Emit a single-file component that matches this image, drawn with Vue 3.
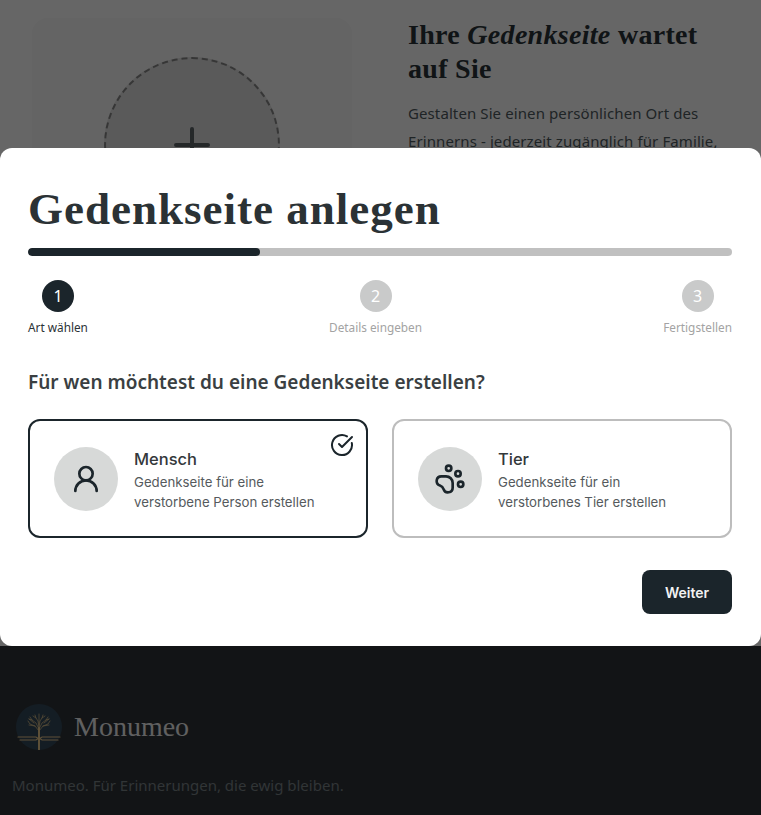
<template>
  <div class="page">
    <main class="hero">
      <div class="upload-card">
        <div class="upload-circle">
          <svg class="plus" viewBox="0 0 36 36" fill="none" stroke="#5c6468" stroke-width="4" stroke-linecap="round">
            <path d="M18 2v32M2 18h32" />
          </svg>
        </div>
      </div>
      <div class="intro">
        <h2>Ihre <em>Gedenkseite</em> wartet auf Sie</h2>
        <p>Gestalten Sie einen persönlichen Ort des Erinnerns - jederzeit zugänglich für Familie, Freunde und alle, die sich erinnern möchten.</p>
      </div>
    </main>
    <footer class="footer">
      <div class="brand">
        <svg class="logo" viewBox="0 0 46 46">
          <circle cx="23" cy="23" r="23" fill="#34495a" />
          <g stroke="#e8c88c" fill="none" stroke-width="0.7" stroke-linecap="round">
            <path d="M23 46V24" stroke-width="2" />
            <path d="M23 27l-4-5-5-2-2-3M23 27l4-5 5-2 2-3M23 25l-3-6-4-3-2-3M23 25l3-6 4-3 2-3M23 24l-1-7-2-3-1-3M23 24l1-7 2-3 1-3M23 20V10M19 22l-6-1M27 22l6-1M16 16l-3-1M30 16l3-1M20 14l-3-2M26 14l3-2M18 19l-5-4M28 19l5-4" />
            <path d="M2 33h18l3 2 3-2h18" stroke-width="1.2" />
            <path d="M4 36h16l3-2 3 2h16" stroke-width="1.2" />
          </g>
        </svg>
        <span class="brand-name">Monumeo</span>
      </div>
      <p class="tagline">Monumeo. Für Erinnerungen, die ewig bleiben.</p>
    </footer>

    <div class="overlay"></div>

    <section class="modal">
      <h1>Gedenkseite anlegen</h1>
      <div class="progress"><div class="progress-fill" :style="{ width: progress + '%' }"></div></div>

      <ol class="steps">
        <li v-for="(step, i) in steps" :key="step" class="step" :class="{ active: i === current }">
          <span class="step-num">{{ i + 1 }}</span>
          <span class="step-label">{{ step }}</span>
        </li>
      </ol>

      <h3 class="question">Für wen möchtest du eine Gedenkseite erstellen?</h3>

      <div class="options">
        <button class="option selected" type="button">
          <span class="option-icon">
            <svg viewBox="0 0 24 24" class="icon-svg">
              <circle cx="12" cy="8" r="5" />
              <path d="M20 21a8 8 0 0 0-16 0" />
            </svg>
          </span>
          <span class="option-text">
            <strong>Mensch</strong>
            <span>Gedenkseite für eine verstorbene Person erstellen</span>
          </span>
          <svg viewBox="0 0 24 24" class="icon-svg check">
            <path d="M21.801 10A10 10 0 1 1 17 3.335" />
            <path d="m9 11 3 3L22 4" />
          </svg>
        </button>
        <button class="option" type="button">
          <span class="option-icon">
            <svg viewBox="0 0 24 24" class="icon-svg">
              <circle cx="11" cy="4" r="2" />
              <circle cx="18" cy="8" r="2" />
              <circle cx="20" cy="16" r="2" />
              <path d="M9 10a5 5 0 0 1 5 5v3.5a3.5 3.5 0 0 1-6.84 1.045Q6.52 17.48 4.46 16.84A3.5 3.5 0 0 1 5.5 10Z" />
            </svg>
          </span>
          <span class="option-text">
            <strong>Tier</strong>
            <span>Gedenkseite für ein verstorbenes Tier erstellen</span>
          </span>
        </button>
      </div>

      <div class="actions">
        <button class="next" type="button">Weiter</button>
      </div>
    </section>
  </div>
</template>

<script setup>
const steps = ['Art wählen', 'Details eingeben', 'Fertigstellen'];
const current = 0;
const progress = 33;
</script>

<style>
html, body {
  margin: 0;
  height: 100%;
  overflow: hidden;
}
</style>

<style scoped>
.page {
  position: relative;
  height: 815px;
  overflow: hidden;
  background: #fff;
  font-family: "Noto Sans", sans-serif;
  display: flex;
  flex-direction: column;
}

.hero {
  flex: 1;
  display: grid;
  grid-template-columns: 320px 1fr;
  gap: 56px;
  padding: 18px 30px 0 32px;
}

.upload-card {
  height: 320px;
  border-radius: 16px;
  background: #f9f9f9;
  display: flex;
  justify-content: center;
  padding-top: 39px;
  box-sizing: border-box;
}

.upload-circle {
  width: 176px;
  height: 176px;
  box-sizing: border-box;
  border-radius: 50%;
  border: 2px dashed #888;
  background: #e0e0e0;
  display: flex;
  align-items: center;
  justify-content: center;
}

.plus {
  width: 36px;
  height: 36px;
}

.intro h2 {
  margin: 0;
  font-family: "Liberation Serif", serif;
  font-size: 28px;
  line-height: 34px;
  font-weight: 700;
  letter-spacing: 0.3px;
  color: #2a3338;
}

.intro p {
  margin: 13px 0 0;
  font-size: 15px;
  line-height: 28px;
  letter-spacing: 0.1px;
  color: #4f5a60;
}

.footer {
  height: 169px;
  box-sizing: border-box;
  padding: 58px 12px 0;
  background: #2d3338;
}

.brand {
  display: flex;
  align-items: center;
  gap: 12px;
  padding-left: 4px;
}

.logo {
  width: 46px;
  height: 46px;
}

.brand-name {
  font-family: "Liberation Serif", serif;
  font-size: 28px;
  color: #f0f0f0;
}

.tagline {
  margin: 25px 0 0;
  font-size: 15px;
  color: #7c8488;
}

.overlay {
  position: absolute;
  inset: 0;
  background: rgba(0, 0, 0, 0.6);
}

.modal {
  position: absolute;
  left: 0;
  right: 0;
  top: 148px;
  height: 498px;
  box-sizing: border-box;
  padding: 34px 29px 32px 28px;
  background: #fff;
  border-radius: 12px;
}

h1 {
  margin: 0;
  font-family: "Liberation Serif", serif;
  font-size: 45px;
  line-height: 54px;
  font-weight: 700;
  letter-spacing: 1px;
  color: #2b3235;
}

.progress {
  margin-top: 12px;
  height: 8px;
  border-radius: 4px;
  background: #c0c0c0;
  overflow: hidden;
}

.progress-fill {
  height: 100%;
  border-radius: 4px;
  background: #1b252b;
}

.steps {
  list-style: none;
  margin: 24px 0 0;
  padding: 0;
  display: flex;
  justify-content: space-between;
}

.step {
  display: flex;
  flex-direction: column;
  align-items: center;
  gap: 8px;
}

.step-num {
  width: 32px;
  height: 32px;
  border-radius: 50%;
  background: #c9caca;
  color: #fff;
  font-size: 16px;
  line-height: 32px;
  text-align: center;
}

.step-label {
  font-size: 11.8px;
  line-height: 15px;
  color: #a3a3a3;
}

.step.active .step-num {
  background: #1b252b;
}

.step.active .step-label {
  color: #2b3235;
}

.question {
  margin: 33px 0 0;
  font-family: "Noto Sans", sans-serif;
  font-size: 19px;
  line-height: 28px;
  font-weight: 600;
  color: #3a3f42;
}

.options {
  margin-top: 23px;
  display: grid;
  grid-template-columns: 1fr 1fr;
  gap: 24px;
}

.option {
  position: relative;
  display: flex;
  align-items: center;
  gap: 16px;
  height: 119px;
  padding: 0 24px;
  box-sizing: border-box;
  border: 2px solid #bdbdbd;
  border-radius: 12px;
  background: #fff;
  text-align: left;
  font-family: Inter, sans-serif;
}

.option.selected {
  border-color: #1b252b;
}

.option-icon {
  flex: none;
  width: 64px;
  height: 64px;
  border-radius: 50%;
  background: #d7d9d8;
  display: flex;
  align-items: center;
  justify-content: center;
}

.icon-svg {
  width: 32px;
  height: 32px;
  fill: none;
  stroke: #1b252b;
  stroke-width: 2;
  stroke-linecap: round;
  stroke-linejoin: round;
}

.option-text {
  display: flex;
  flex-direction: column;
  font-size: 13.25px;
  line-height: 20px;
  color: #555a5d;
}

.option-text strong {
  font-size: 16.5px;
  line-height: 26px;
  font-weight: 500;
  color: #33383b;
}

.check {
  position: absolute;
  top: 12px;
  right: 12px;
  width: 24px;
  height: 24px;
}

.actions {
  margin-top: 32px;
  display: flex;
  justify-content: flex-end;
}

.next {
  width: 90px;
  height: 44px;
  border: none;
  border-radius: 8px;
  background: #1b252b;
  color: #f2f2f2;
  font-family: Inter, sans-serif;
  font-size: 14px;
  font-weight: 600;
}
</style>
